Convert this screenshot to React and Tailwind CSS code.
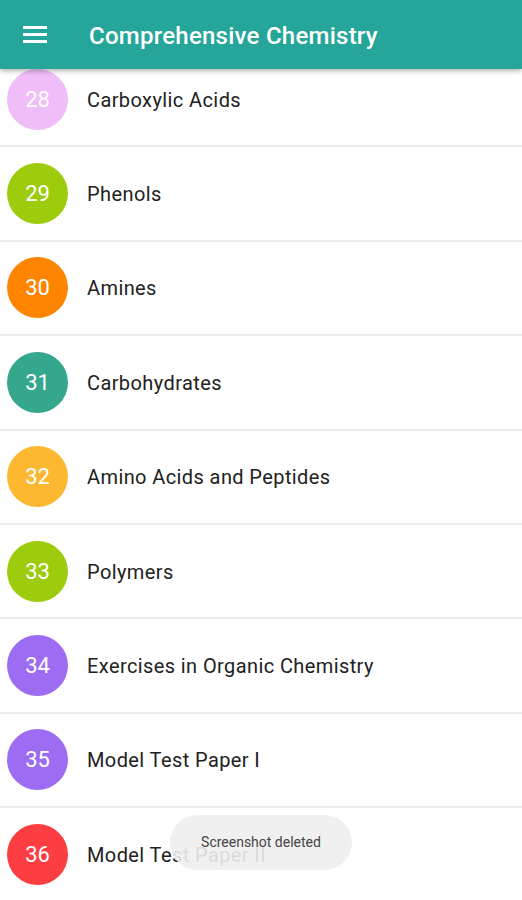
const chapters = [
  { n: 28, title: "Carboxylic Acids", color: "bg-[#efbdf7]" },
  { n: 29, title: "Phenols", color: "bg-[#9dcc0c]" },
  { n: 30, title: "Amines", color: "bg-[#ff8500]" },
  { n: 31, title: "Carbohydrates", color: "bg-[#35a78c]" },
  { n: 32, title: "Amino Acids and Peptides", color: "bg-[#fdb832]" },
  { n: 33, title: "Polymers", color: "bg-[#9dcc0c]" },
  { n: 34, title: "Exercises in Organic Chemistry", color: "bg-[#9c6cf2]" },
  { n: 35, title: "Model Test Paper I", color: "bg-[#9c6cf2]" },
  { n: 36, title: "Model Test Paper II", color: "bg-[#fc3d42]" },
];

export default function App() {
  return (
    <div className="relative h-[900px] w-[522px] overflow-hidden bg-white font-['Roboto',sans-serif]">
      <header className="relative z-10 flex h-[69px] items-center bg-[#26a69a] shadow-[0_2px_5px_rgba(0,0,0,0.3)]">
        <button className="ml-[23px] flex h-[24px] w-[24px] flex-col justify-center gap-[4px]">
          <span className="block h-[3px] w-[24px] bg-white" />
          <span className="block h-[3px] w-[24px] bg-white" />
          <span className="block h-[3px] w-[24px] bg-white" />
        </button>
        <h1 className="ml-[42px] mt-[3px] text-[24px] font-medium tracking-[0.25px] text-white">
          Comprehensive Chemistry
        </h1>
      </header>

      <ul className="-mt-[16px]">
        {chapters.map((c) => (
          <li
            key={c.n}
            className="flex h-[94.4px] items-center border-b-2 border-[#ececec]"
          >
            <div
              className={`ml-[7px] flex h-[61px] w-[61px] shrink-0 items-center justify-center rounded-full ${c.color} text-[22px] text-white`}
            >
              {c.n}
            </div>
            <span className="ml-[19px] mt-[1px] text-[20px] tracking-[0.4px] text-[#212121]">{c.title}</span>
          </li>
        ))}
      </ul>

      <div className="absolute left-[170px] top-[815px] flex h-[55px] w-[182px] items-center justify-center rounded-full bg-[#eeeeee]/90 text-[14px] text-[#444]">
        Screenshot deleted
      </div>
    </div>
  );
}
